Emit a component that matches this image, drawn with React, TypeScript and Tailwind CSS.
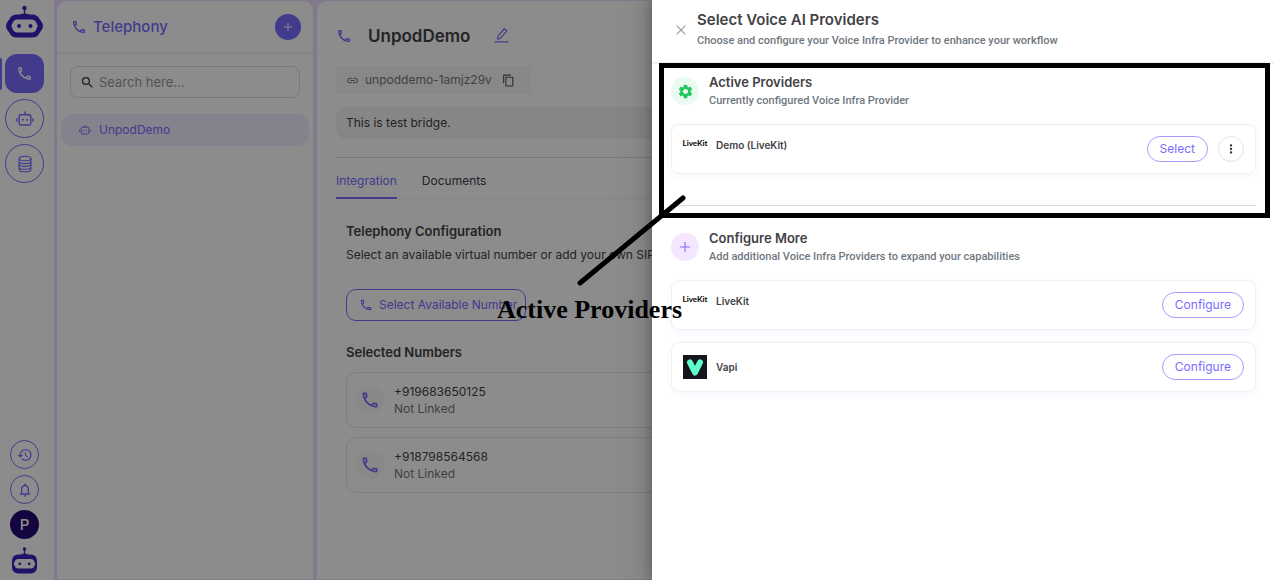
import { useId } from "react";
import type { ReactNode } from "react";
import { MdOutlinePhone, MdHistory, MdNotificationsNone, MdSearch, MdLink, MdContentCopy, MdSettings, MdMoreVert } from "react-icons/md";
import { AiOutlinePlus, AiOutlineClose } from "react-icons/ai";

function BrandBot({ className }: { className: string }) {
  return (
    <svg viewBox="0 0 38 34" className={className} aria-hidden="true">
      <circle cx="18.5" cy="3" r="2.2" fill="currentColor" />
      <path d="M18.5 3v8" stroke="currentColor" strokeWidth="1.4" />
      <path d="M13.5 10.5l2-1.8h6l2 1.8z" fill="currentColor" />
      <path d="M11 9.5h15c4 0 6 1.5 7.5 4.5l2.5 3.5c1.3 2.4 1.3 4.6 0 7l-2.5 3.5c-1.5 3-3.500 4.500-7.500 4.500H11c-4 0-6-1.500-7.500-4.500L1 24.500c-1.300-2.400-1.300-4.600 0-7L3.500 14C5 11 7 9.500 11 9.500z" fill="currentColor" />
      <path d="M12 14.500h13c3 0 4.300 1 5.200 3l1.500 3.500-1.500 3.500c-.9 2-2.200 3-5.200 3H12c-3 0-4.300-1-5.200-3L5.300 21l1.500-3.500c.9-2 2.200-3 5.200-3z" fill="#fff" />
      <circle cx="13" cy="21" r="2" fill="currentColor" />
      <circle cx="24.500" cy="21" r="2" fill="currentColor" />
    </svg>
  );
}

function BrandBotSmall({ className }: { className: string }) {
  return (
    <svg viewBox="0 0 26 27" className={className} aria-hidden="true">
      <circle cx="12.500" cy="2" r="1.700" fill="currentColor" />
      <path d="M12.500 2v6M9.500 7.500h6" stroke="currentColor" strokeWidth="1.400" />
      <rect x="0" y="7.500" width="25" height="19" rx="6" fill="currentColor" />
      <path d="M6.500 12h12c2.500 0 3.200 1 4 3l.8 1.800-.8 1.800c-.8 2-1.500 3-4 3h-12c-2.500 0-3.200-1-4-3l-.8-1.800.8-1.800c.8-2 1.500-3 4-3z" fill="#fff" />
      <circle cx="7.800" cy="16.800" r="1.400" fill="currentColor" />
      <circle cx="17.200" cy="16.800" r="1.400" fill="currentColor" />
    </svg>
  );
}

function BotIcon({ className }: { className: string }) {
  return (
    <svg viewBox="0 0 18 18" className={className} fill="none" stroke="currentColor" strokeWidth="1.4" aria-hidden="true">
      <rect x="3.200" y="4.800" width="11.600" height="10.200" rx="1.600" />
      <path d="M9 5V1.500M1 8.200v3.600M17 8.200v3.600" />
      <circle cx="6.900" cy="9.800" r="1" fill="currentColor" stroke="none" />
      <circle cx="11.100" cy="9.800" r="1" fill="currentColor" stroke="none" />
    </svg>
  );
}

function DatabaseIcon({ className }: { className: string }) {
  return (
    <svg viewBox="0 0 16 18" className={className} fill="none" stroke="currentColor" strokeWidth="1.100" aria-hidden="true">
      <ellipse cx="8" cy="3.500" rx="6" ry="2.300" />
      <path d="M2 3.500v11c0 1.300 2.700 2.300 6 2.300s6-1 6-2.300v-11M2 6.300c0 1.300 2.700 2.300 6 2.300s6-1 6-2.300M2 9.100c0 1.300 2.700 2.300 6 2.300s6-1 6-2.300M2 11.900c0 1.300 2.700 2.300 6 2.300s6-1 6-2.300" />
    </svg>
  );
}

function EditIcon({ className }: { className: string }) {
  return (
    <svg viewBox="0 0 16 16" className={className} fill="none" stroke="currentColor" strokeWidth="1.300" strokeLinejoin="round" aria-hidden="true">
      <path d="M3.800 11.800l.5-3.300 6.800-7.700 2.600 2.300-6.800 7.700z" />
      <path d="M.5 14.800h15" />
    </svg>
  );
}

function LiveKitLogo() {
  return (
    <span className="flex h-3 w-6 items-center justify-center font-['Lato',sans-serif] text-[8px] font-bold leading-3 text-black">
      LiveKit
    </span>
  );
}

function VapiLogo() {
  return (
    <svg viewBox="0 0 24 24" className="size-6" role="img" aria-label="Vapi logo">
      <rect width="24" height="24" fill="#14161c" />
      <path d="M7 7.500L12 17.500L17 7.500" fill="none" stroke="#5dfeca" strokeWidth="6" strokeLinecap="round" strokeLinejoin="round" />
    </svg>
  );
}

function SectionHeader({ icon, tone, title, text }: { icon: ReactNode; tone: string; title: string; text: string }) {
  return (
    <div className="flex items-center gap-2.5">
      <span className={`flex size-7 shrink-0 items-center justify-center rounded-full ${tone}`}>{icon}</span>
      <div>
        <h3 className="text-[13px] font-semibold leading-5">{title}</h3>
        <p className="font-['Roboto',sans-serif] text-[11px] font-medium leading-[18px] text-[#6f7780]">{text}</p>
      </div>
    </div>
  );
}

function ProviderCard({ logo, name, top, children }: { logo: ReactNode; name: string; top?: boolean; children: ReactNode }) {
  return (
    <li className="flex h-[50px] items-center justify-between rounded-lg border border-[#f0f0f3] px-[11px] shadow-[0_2px_6px_rgba(121,108,255,0.06)]">
      <div className={`flex gap-[9px] ${top ? "h-6 items-start" : "items-center"}`}>
        {logo}
        <span className="text-[10px] font-semibold leading-4">{name}</span>
      </div>
      <div className="flex items-center gap-2.5">{children}</div>
    </li>
  );
}

function PillButton({ children }: { children: ReactNode }) {
  return (
    <button className="h-[26px] rounded-full border border-[#a79eff] px-3 text-[12px] leading-4 text-[#796cff]">
      {children}
    </button>
  );
}

function NumberCard({ number }: { number: string }) {
  return (
    <li className="flex h-14 items-center gap-2.5 rounded-[10px] border border-[#e6e6e6] px-[9px]">
      <span className="flex size-7 items-center justify-center rounded-full bg-[#f7f7f7] text-[#796cff]">
        <MdOutlinePhone className="size-5" />
      </span>
      <div className="text-[12px] leading-[17px]">
        <p>{number}</p>
        <p className="text-[#77777b]">Not Linked</p>
      </div>
    </li>
  );
}

function Rail() {
  return (
    <nav className="flex w-[54px] shrink-0 flex-col items-center justify-between pt-[5px] pr-[5px] pb-1.5" aria-label="Main">
      <div className="flex flex-col items-center">
        <BrandBot className="h-[34px] w-[38px] text-[#3a22c0]" />
        <div className="mt-[15px] flex flex-col gap-1.5">
          <button aria-label="Telephony" className="relative flex size-[39px] items-center justify-center rounded-xl bg-[#796cff] text-white">
            <span className="absolute top-1 -left-[5px] h-8 w-0.5 rounded-r bg-[#796cff]" />
            <MdOutlinePhone className="size-[17px]" />
          </button>
          <button aria-label="Agents" className="flex size-[39px] items-center justify-center rounded-full border border-[#796cff] text-[#796cff]">
            <BotIcon className="size-[18px]" />
          </button>
          <button aria-label="Data" className="flex size-[39px] items-center justify-center rounded-full border border-[#796cff] text-[#796cff]">
            <DatabaseIcon className="h-[18px] w-4" />
          </button>
        </div>
      </div>
      <div className="flex flex-col items-center gap-1.5">
        <button aria-label="History" className="flex size-[29px] items-center justify-center rounded-full border border-[#796cff] text-[#796cff]">
          <MdHistory className="size-4" />
        </button>
        <button aria-label="Notifications" className="flex size-[29px] items-center justify-center rounded-full border border-[#796cff] text-[#796cff]">
          <MdNotificationsNone className="size-4" />
        </button>
        <button className="flex size-[29px] items-center justify-center rounded-full bg-[#250975] text-[15px] font-medium leading-4 text-white">P</button>
        <BrandBotSmall className="mt-0.5 h-[27px] w-[26px] text-[#3a22c0]" />
      </div>
    </nav>
  );
}

function Sidebar() {
  const searchId = useId();
  return (
    <aside className="w-64 shrink-0 rounded-t-[10px] bg-white">
      <header className="flex h-[53px] items-center justify-between border-b-2 border-[#f0f0f0] pr-3 pl-[14px]">
        <h1 className="flex items-center gap-1.5 text-[15px] font-medium leading-5 text-[#796cff]">
          <MdOutlinePhone className="size-4" />
          Telephony
        </h1>
        <button aria-label="Add" className="flex size-[26px] items-center justify-center rounded-full bg-[#796cff] text-white">
          <AiOutlinePlus className="size-3" />
        </button>
      </header>
      <div className="px-[13px] pt-3">
        <div className="flex h-8 items-center gap-1 rounded-lg border border-[#dcdcdc] px-[9px]">
          <label htmlFor={searchId} aria-label="Search">
            <MdSearch className="size-[15px] text-[#38383c]" />
          </label>
          <input id={searchId} placeholder="Search here..." className="min-w-0 flex-1 bg-transparent text-[13px] leading-5 outline-none placeholder:text-[#9a9a9f]" />
        </div>
      </div>
      <a href="#demo" className="mx-1 mt-4 flex h-8 items-center gap-2 rounded-xl bg-[#f0edff] pl-[18px] text-[12px] leading-4 text-[#796cff]">
        <BotIcon className="size-3" />
        UnpodDemo
      </a>
    </aside>
  );
}

function Main() {
  return (
    <main className="min-w-0 flex-1 rounded-t-[10px] bg-white px-[19px]">
      <div className="flex h-[65px] items-center pt-1">
        <MdOutlinePhone className="size-4 text-[#796cff]" />
        <h2 className="ml-4 text-[17px] font-semibold leading-6">UnpodDemo</h2>
        <button aria-label="Rename" className="ml-6 text-[#796cff]">
          <EditIcon className="size-[15px]" />
        </button>
      </div>
      <div className="flex h-7 w-[195px] items-center bg-[#f8f8f8] px-2.5 text-[12px] leading-4 text-[#77777b]">
        <MdLink className="size-[13px]" />
        <span className="ml-1.5">unpoddemo-1amjz29v</span>
        <button aria-label="Copy" className="ml-2.5 text-[#505054]">
          <MdContentCopy className="size-[13px]" />
        </button>
      </div>
      <p className="mt-[13px] flex h-8 items-center rounded-[10px] bg-[#f5f5f5] px-2.5 text-[12px] leading-4">This is test bridge.</p>
      <div className="mt-[18px] flex h-[42px] gap-[25px] border-t border-[#dddddd] text-[12px] leading-4 shadow-[inset_0_-1px_0_#f0f0f0]">
        <button className="flex border-b-2 border-[#796cff] pt-[15px] text-[#796cff]">Integration</button>
        <button className="flex pt-[15px]">Documents</button>
      </div>
      <div className="pl-2.5">
        <h3 className="mt-[22px] text-[13px] font-semibold leading-5">Telephony Configuration</h3>
        <p className="mt-1 text-[12px] leading-5 whitespace-nowrap">Select an available virtual number or add your own SIP trunk</p>
        <button className="mt-6 flex h-8 w-[180px] items-center gap-1.5 rounded-[10px] border border-[#796cff] px-3 text-[12px] leading-4 whitespace-nowrap text-[#796cff]">
          <MdOutlinePhone className="size-[14px] shrink-0" />
          Select Available Number
        </button>
        <h3 className="mt-[21px] text-[13px] font-semibold leading-5">Selected Numbers</h3>
        <ul className="mt-2.5 flex flex-col gap-[9px]">
          <NumberCard number="+919683650125" />
          <NumberCard number="+918798564568" />
        </ul>
      </div>
    </main>
  );
}

function Annotation() {
  return (
    <div className="pointer-events-none absolute inset-0 z-10">
      <div className="absolute top-[63px] right-1 left-[7px] h-[155px] border-[5px] border-black" />
      <svg viewBox="0 0 110 92" className="absolute top-[195px] -left-[75px] h-[92px] w-[110px]" aria-hidden="true">
        <path d="M3 88L106 3" stroke="#000" strokeWidth="5" strokeLinecap="round" />
      </svg>
      <p className="absolute top-[294px] -left-[155px] font-['Liberation_Serif',serif] text-[26px] font-bold leading-8 whitespace-nowrap text-black">
        Active Providers
      </p>
    </div>
  );
}

function ProviderDrawer() {
  return (
    <section role="dialog" aria-labelledby="drawer-title" className="absolute inset-y-0 right-0 w-[622px] bg-white shadow-[-6px_0_16px_rgba(0,0,0,0.12),-3px_0_6px_rgba(0,0,0,0.12),-9px_0_28px_8px_rgba(0,0,0,0.05)]">
      <header className="flex h-16 items-center gap-[9px] border-b-2 border-[#f0f0f0] px-[22px] pb-0.5">
        <button aria-label="Close" className="text-[#999999]">
          <AiOutlineClose className="size-3.5" />
        </button>
        <div>
          <h2 id="drawer-title" className="text-[15px] font-semibold leading-[22px]">Select Voice AI Providers</h2>
          <p className="font-['Roboto',sans-serif] text-[11px] font-medium leading-5 text-[#6f7780]">Choose and configure your Voice Infra Provider to enhance your workflow</p>
        </div>
      </header>
      <div className="pt-2 pr-[18px] pl-[19px]">
        <SectionHeader icon={<MdSettings className="size-[17px]" />} tone="bg-[#e9faf0] text-[#22c55e]" title="Active Providers" text="Currently configured Voice Infra Provider" />
        <ul className="mt-3.5">
          <ProviderCard logo={<LiveKitLogo />} name="Demo (LiveKit)" top>
            <PillButton>Select</PillButton>
            <button aria-label="More" className="flex size-[26px] items-center justify-center rounded-full border border-[#e3e3e3] text-[#38383c]">
              <MdMoreVert className="size-3.5" />
            </button>
          </ProviderCard>
        </ul>
        <hr className="mt-[31px] mb-[22px] border-[#d9d9d9]" />
        <SectionHeader icon={<AiOutlinePlus className="size-3.5" />} tone="bg-[#f5e7ff] text-[#796cff]" title="Configure More" text="Add additional Voice Infra Providers to expand your capabilities" />
        <ul className="mt-3.5 flex flex-col gap-3">
          <ProviderCard logo={<LiveKitLogo />} name="LiveKit" top>
            <PillButton>Configure</PillButton>
          </ProviderCard>
          <ProviderCard logo={<VapiLogo />} name="Vapi">
            <PillButton>Configure</PillButton>
          </ProviderCard>
        </ul>
      </div>
      <Annotation />
    </section>
  );
}

export default function App() {
  return (
    <div className="relative min-h-screen overflow-hidden font-['Inter',sans-serif] text-[#424246]">
      <div className="flex h-screen min-h-[580px] bg-white">
        <Rail />
        <div className="flex min-w-0 flex-1 gap-1 bg-[#eddcff] px-[3px] pt-px pb-px">
          <Sidebar />
          <Main />
        </div>
      </div>
      <div className="absolute inset-0 bg-black/45" />
      <ProviderDrawer />
    </div>
  );
}
